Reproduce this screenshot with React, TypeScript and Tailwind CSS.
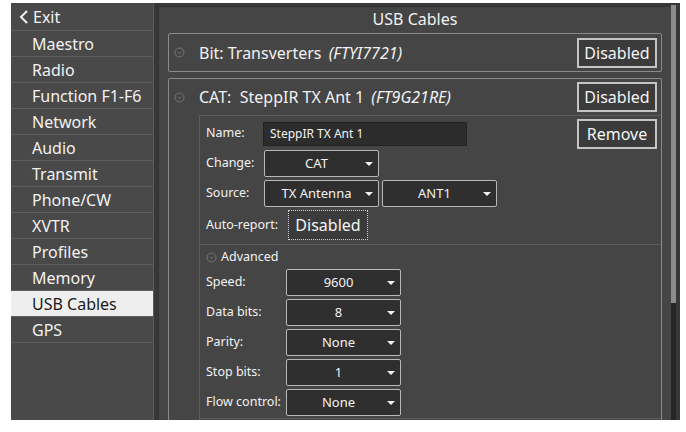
import React from "react";

const menu = [
  "Maestro",
  "Radio",
  "Function F1-F6",
  "Network",
  "Audio",
  "Transmit",
  "Phone/CW",
  "XVTR",
  "Profiles",
  "Memory",
  "USB Cables",
  "GPS",
];

const font = { fontFamily: '"Noto Sans", "Open Sans", sans-serif' };

function Dot() {
  return (
    <svg width="11" height="11" viewBox="0 0 11 11" className="shrink-0">
      <circle cx="5.5" cy="5.5" r="4.5" fill="none" stroke="#777" strokeWidth="1" />
      <path d="M3.5 4.8 L5.5 6.6 L7.5 4.8" fill="none" stroke="#777" strokeWidth="0.9" />
    </svg>
  );
}

function Caret() {
  return (
    <svg width="8" height="5" viewBox="0 0 8 5" className="absolute right-[5px] top-1/2 -translate-y-1/2">
      <path d="M0 0.5 H8 L4 4.5 Z" fill="#f2f2f2" />
    </svg>
  );
}

function Select({ value, w }: { value: string; w: number }) {
  return (
    <div
      className="relative flex h-[27px] items-center justify-center rounded-[2px] border border-[#b8b8b8] bg-[#2f2f2f] text-[13px] text-[#f2f2f2]"
      style={{ width: w }}
    >
      <span className="pr-[10px]">{value}</span>
      <Caret />
    </div>
  );
}

function BigButton({ label, dotted }: { label: string; dotted?: boolean }) {
  return (
    <div
      className={
        dotted
          ? "flex h-[30px] w-[80px] items-center justify-center border border-dotted border-[#cfcfcf] bg-[#3b3b3b] text-[16px] text-[#f4f4f4]"
          : "flex h-[30px] w-[80px] items-center justify-center border-2 border-[#c4c4c4] bg-[#3b3b3b] text-[16px] text-[#f4f4f4]"
      }
    >
      {label}
    </div>
  );
}

function Row({ label, lw, children }: { label: string; lw: number; children: React.ReactNode }) {
  return (
    <div className="flex h-[30px] items-start">
      <div className="flex h-[27px] items-center">
        <span className="whitespace-nowrap" style={{ width: lw }}>
          {label}
        </span>
        {children}
      </div>
    </div>
  );
}

export default function App() {
  return (
    <div className="h-[432px] w-[686px] bg-white pl-[11px] pt-[3px]" style={font}>
      <div className="flex h-[417px] w-[669px] bg-[#383838]">
        {/* sidebar */}
        <div className="flex w-[143px] flex-col border-r border-[#5c5c5c] bg-[#494949] text-[16px] text-[#f2f2f2]">
          <div className="flex h-[28px] items-center gap-[4px] border-b border-[#5e5e5e] pl-[8px]">
            <svg width="10" height="14" viewBox="0 0 10 14">
              <path d="M8 1 L2 7 L8 13" fill="none" stroke="#f2f2f2" strokeWidth="2" />
            </svg>
            <span>Exit</span>
          </div>
          {menu.map((m) => (
            <div
              key={m}
              className={
                m === "USB Cables"
                  ? "flex h-[26px] items-center border-b border-[#5e5e5e] bg-[#eeeeee] pl-[21px] text-[#1a1a1a]"
                  : "flex h-[26px] items-center border-b border-[#5e5e5e] pl-[21px]"
              }
            >
              {m}
            </div>
          ))}
        </div>

        {/* main */}
        <div className="ml-[4px] mt-[3px] flex w-[513px] flex-col overflow-hidden border-l border-t border-[#333] bg-[#454545] text-[#f2f2f2]">
          <div className="flex h-[24px] items-center justify-center text-[16px]">USB Cables</div>

          <div className="mx-[9px] mt-[2px] flex h-[39px] shrink-0 items-center rounded-[2px] border border-[#8a8a8a] pl-[5px] pr-[4px]">
            <Dot />
            <span className="ml-[14px] text-[16px]">
              Bit: Transverters <i className="ml-[3px]">(FTYI7721)</i>
            </span>
            <div className="ml-auto">
              <BigButton label="Disabled" />
            </div>
          </div>

          <div className="mx-[9px] mt-[6px] flex flex-1 flex-col rounded-t-[2px] border border-b-0 border-[#8a8a8a]">
            <div className="flex h-[36px] shrink-0 items-center pl-[5px] pr-[4px]">
              <Dot />
              <span className="ml-[14px] text-[16px]">
                CAT:&nbsp; SteppIR TX Ant 1 <i className="ml-[3px]">(FT9G21RE)</i>
              </span>
              <div className="ml-auto">
                <BigButton label="Disabled" />
              </div>
            </div>

            <div className="ml-[30px] flex flex-1 flex-col border-l border-t border-[#5c5c5c] pl-[6px] text-[12.5px]">
              <div className="flex h-[34px] items-center pr-[4px] pt-[1px]">
                <span className="w-[57px]">Name:</span>
                <div className="flex h-[24px] w-[204px] items-center border border-[#222] bg-[#2c2c2c] pl-[6px] text-[12px]">
                  SteppIR TX Ant 1
                </div>
                <div className="ml-auto">
                  <BigButton label="Remove" />
                </div>
              </div>
              <Row label="Change:" lw={58}>
                <Select value="CAT" w={115} />
              </Row>
              <Row label="Source:" lw={58}>
                <Select value="TX Antenna" w={115} />
                <div className="ml-[3px]">
                  <Select value="ANT1" w={115} />
                </div>
              </Row>
              <div className="flex h-[34px] items-start">
                <div className="flex h-[30px] items-center">
                  <span className="w-[82px]">Auto-report:</span>
                  <BigButton label="Disabled" dotted />
                </div>
              </div>

              <div className="-ml-[6px] flex flex-1 flex-col border-t border-[#5c5c5c] pl-[6px]">
                <div className="flex h-[24px] items-center gap-[4px]">
                  <Dot />
                  <span>Advanced</span>
                </div>
                {[
                  ["Speed:", "9600"],
                  ["Data bits:", "8"],
                  ["Parity:", "None"],
                  ["Stop bits:", "1"],
                  ["Flow control:", "None"],
                ].map(([l, v]) => (
                  <Row key={l} label={l} lw={80}>
                    <Select value={v} w={115} />
                  </Row>
                ))}
                <div className="-ml-[6px] mt-[-1px] border-t border-[#5c5c5c]" />
              </div>
            </div>
          </div>
        </div>

        {/* scrollbar */}
        <div className="mt-[2px] flex w-[5px] flex-col">
          <div className="h-[298px] bg-[#8c8c8c]" />
          <div className="flex-1 bg-[#262626]" />
        </div>
      </div>
    </div>
  );
}
